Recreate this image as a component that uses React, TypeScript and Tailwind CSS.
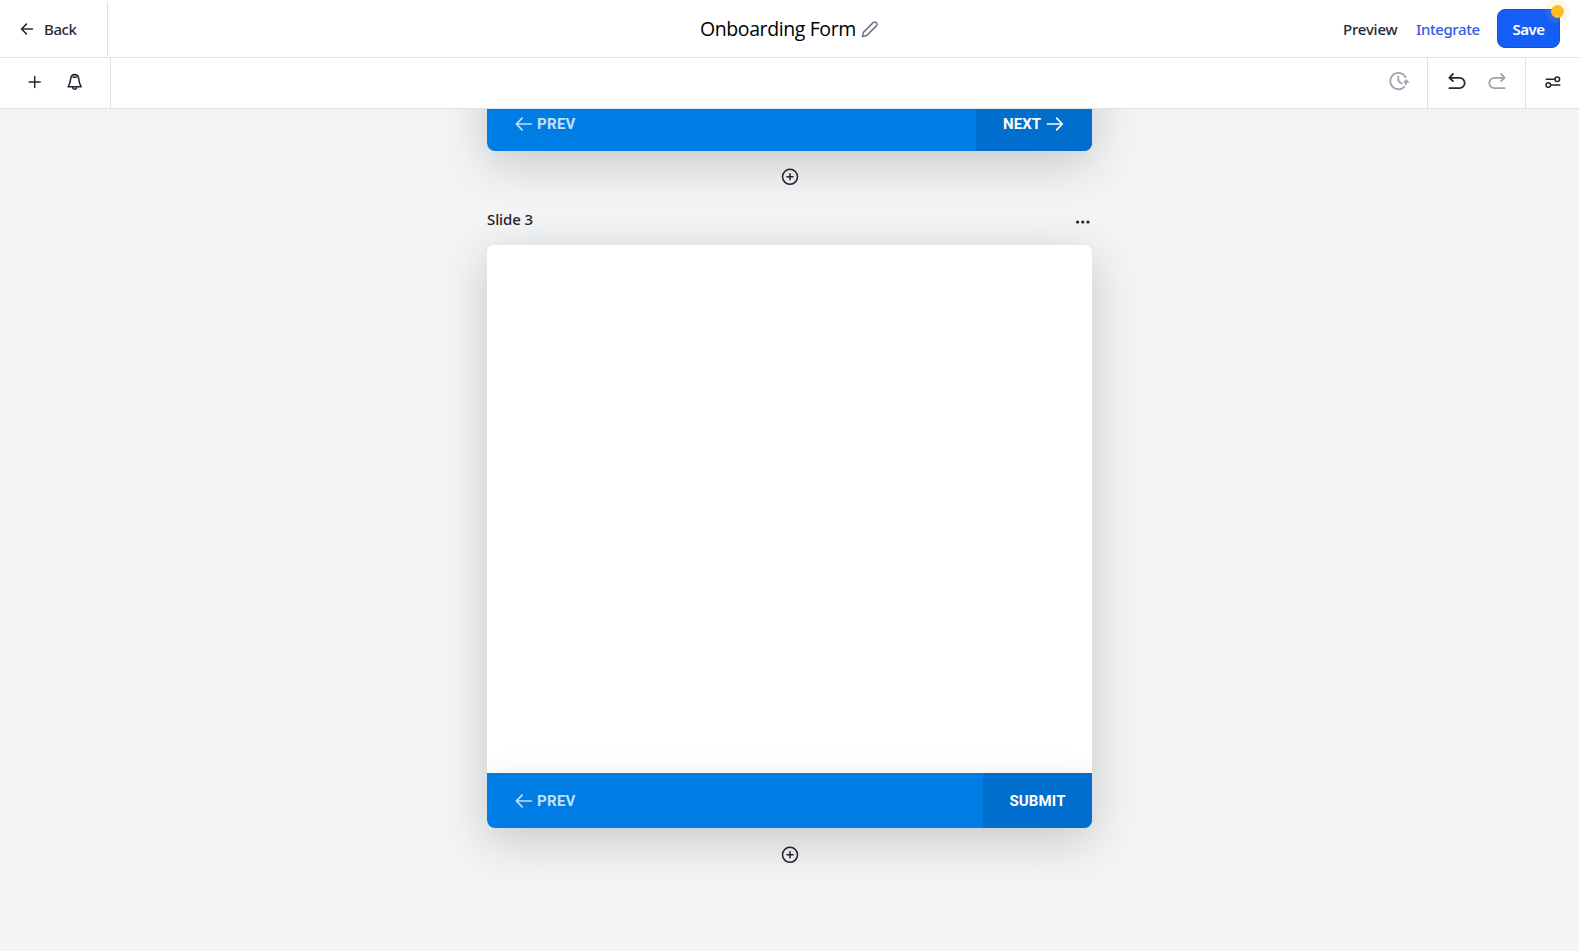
import type { ReactNode } from 'react';

type IconProps = { className?: string; w: number; h: number; stroke?: number; children: ReactNode };

function Icon({ className = '', w, h, stroke = 1.5, children }: IconProps) {
  return (
    <svg
      className={`block shrink-0 ${className}`}
      width={w}
      height={h}
      viewBox={`0 0 ${w} ${h}`}
      fill="none"
      stroke="currentColor"
      strokeWidth={stroke}
      strokeLinecap="round"
      strokeLinejoin="round"
    >
      {children}
    </svg>
  );
}

function Header() {
  return (
    <header className="flex h-[58px] shrink-0 items-center border-b border-[#e0e1e5] bg-white text-[15px] font-medium text-[#1f2937]">
      <button className="flex h-[53px] w-[108px] items-center border-r border-[#dfe0e4] pl-5">
        <Icon w={14} h={14}>
          <path d="M12.5 7H1.7M6.4 2.1 1.5 7l4.9 4.9" />
        </Icon>
        <span className="ml-[10px] mt-[2px] tracking-[-0.4px]">Back</span>
      </button>
      <div className="ml-[592px] flex w-[400px] items-center">
        <h1 className="mt-px w-[161px] whitespace-nowrap font-['Open_Sans',sans-serif] text-[19.5px] font-normal tracking-[-0.4px] text-black">
          Onboarding Form
        </h1>
        <Icon w={18} h={18} stroke={1.5} className="text-[#6b7280]">
          <path d="M1.6 16.4 2.4 12.4 12.4 2.4a2.3 2.3 0 0 1 3.2 3.2L5.6 15.6Z" />
        </Icon>
      </div>
      <div className="ml-auto flex items-center pr-[19px]">
        <button className="w-[72px] pt-[2px] text-left tracking-[-0.2px]">Preview</button>
        <button className="w-[82px] pl-px pt-[2px] text-left tracking-[-0.4px] text-[#2f5fe8]">Integrate</button>
        <button className="relative h-[39px] w-[63px] rounded-lg border border-[#1150e0] bg-[#155ef5] pt-[2px] font-semibold tracking-[-0.5px] text-white">
          Save
          <span className="absolute -right-[10px] -top-[11px] flex size-6 items-center justify-center rounded-full bg-[#fbbf24]/10">
            <span className="size-[13px] rounded-full bg-[#fbbf24]" />
          </span>
        </button>
      </div>
    </header>
  );
}

function Toolbar() {
  return (
    <div className="flex h-[51px] shrink-0 border-b border-[#e0e1e5] bg-white text-[#1f2937]">
      <div className="flex w-[111px] items-center border-r border-[#dfe0e4] pl-7">
        <Icon w={14} h={14} className="-mt-[3px]">
          <path d="M6.7 1.5v11M1.2 7h11" />
        </Icon>
        <Icon w={16} h={18} stroke={1.6} className="-mt-[3px] ml-[25px]">
          <path d="M7.7 1.6C5 1.6 3.8 4 3.6 6.2 3.4 9 2.9 10.6 1.2 13.8h13C12.5 10.6 12 9 11.8 6.2 11.6 4 10.4 1.6 7.7 1.6ZM5.7 14c.2 3 3.8 3 4 0M6.2 4.2h3" />
        </Icon>
      </div>
      <div className="ml-auto flex items-center">
        <div className="flex h-full w-[39px] items-center">
          <Icon w={22} h={20} stroke={1.8} className="-mt-[4px] text-[#9ca3af]">
            <path d="M17.6 6.1A8.2 8.2 0 1 0 16.3 15.8M10.3 5.4v4.1l1.1 1.6 2.4 1.2" />
            <path d="M16.2 11.2h4.4l-2.2-2.4Z" fill="currentColor" strokeWidth="1" />
            <path d="M18.4 10.8q-.1 1.4-.8 2.6" />
          </Icon>
        </div>
        <div className="flex h-full w-[99px] items-center justify-center gap-[22px] border-x border-[#dfe0e4]">
          <Icon w={18} h={18} stroke={1.8} className="-mt-[4px]">
            <path d="M1.4 16.2h10.1a5.2 5.2 0 0 0 0-10.4H1.4M5 1.9 1.3 5.8 5 9.2" />
          </Icon>
          <Icon w={18} h={18} stroke={1.8} className="-mt-[4px] text-[#9ca3af]">
            <path d="M16.6 16.2H6.5a5.2 5.2 0 0 1 0-10.4h10.1M13 1.9l3.7 3.9L13 9.2" />
          </Icon>
        </div>
        <div className="flex h-full w-[53px] items-center pl-[19px]">
          <Icon w={16} h={14} className="-mt-[2px]">
            <path d="M1.2 4.2h8.6M6.2 10h8.7" />
            <circle cx="12.3" cy="4.2" r="2.3" />
            <circle cx="3.3" cy="10" r="2.3" />
          </Icon>
        </div>
      </div>
    </div>
  );
}

function SlideNav({ last = false }: { last?: boolean }) {
  return (
    <div className="flex h-[55px] shrink-0 bg-[#007de4] font-['Roboto',sans-serif] text-[15px] font-bold text-white">
      <button className="flex items-center pl-7 text-[#c3e0f8]">
        <Icon w={18} h={16} stroke={1.7}>
          <path d="M16.3 8H1.4M7.1 2.1 1.4 8l5.7 5.9" />
        </Icon>
        <span className="ml-1 mt-px tracking-[0.3px]">PREV</span>
      </button>
      {last ? (
        <button className="ml-auto w-[109px] bg-[#006ecc] pt-px tracking-[0.15px]">SUBMIT</button>
      ) : (
        <button className="ml-auto flex w-[116px] items-center bg-[#006ecc] pl-[27px]">
          <span className="mt-px tracking-[0.1px]">NEXT</span>
          <Icon w={18} h={16} stroke={1.7} className="ml-[5px]">
            <path d="M1.4 8h14.9M10.6 2.1l5.7 5.9-5.7 5.9" />
          </Icon>
        </button>
      )}
    </div>
  );
}

function AddSlide() {
  return (
    <Icon w={18} h={18} stroke={1.5} className="mx-auto text-[#1f2227]">
      <circle cx="9" cy="8.8" r="7.5" />
      <path d="M9 5.8v6M6 8.8h6" />
    </Icon>
  );
}

export default function App() {
  return (
    <div className="flex h-[951px] w-full flex-col overflow-hidden bg-[#f3f4f6] font-['Noto_Sans',sans-serif]">
      <Header />
      <Toolbar />
      <main className="flex min-h-0 flex-1 flex-col items-center overflow-hidden">
        <section className="-mt-[540px] flex h-[582px] w-[605px] shrink-0 flex-col justify-end overflow-hidden rounded-lg bg-white shadow-[0_12px_48px_rgba(0,0,0,0.19)]">
          <SlideNav />
        </section>
        <div className="mt-[17px] shrink-0">
          <AddSlide />
        </div>
        <div className="relative mt-[22px] flex h-6 w-[605px] shrink-0 items-center justify-between text-[15px] font-medium text-[#1f2227]">
          <span className="-mt-[2px] tracking-[-0.1px]">Slide 3</span>
          <svg className="mr-[2px] mt-[3px] block" width="15" height="4" fill="currentColor">
            <circle cx="2.6" cy="2" r="1.6" />
            <circle cx="7.8" cy="2" r="1.6" />
            <circle cx="13" cy="2" r="1.6" />
          </svg>
        </div>
        <section className="mt-[13px] flex h-[583px] w-[605px] shrink-0 flex-col overflow-hidden rounded-lg bg-white shadow-[0_12px_48px_rgba(0,0,0,0.19)]">
          <div className="flex-1 bg-white" />
          <div className="shadow-[0_0_30px_rgba(0,0,0,0.07)]">
            <SlideNav last />
          </div>
        </section>
        <div className="mt-[18px] shrink-0">
          <AddSlide />
        </div>
      </main>
    </div>
  );
}
